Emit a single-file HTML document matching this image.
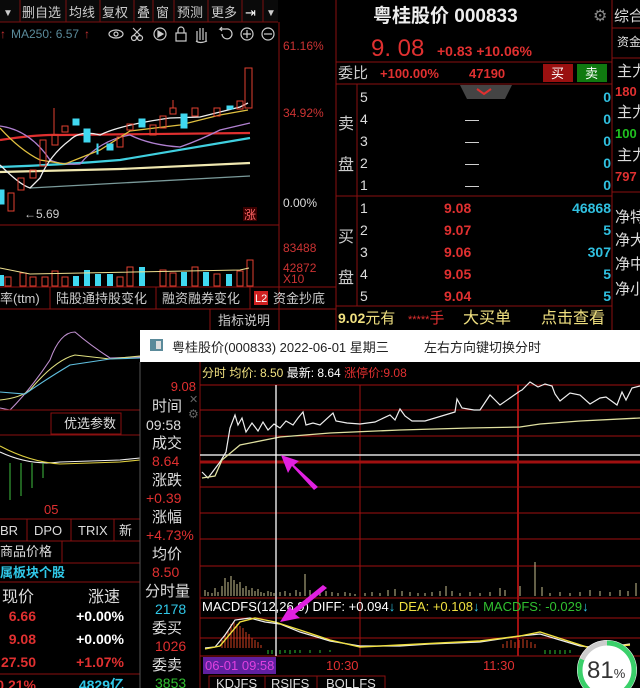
<!DOCTYPE html>
<html><head><meta charset="utf-8"><style>
html,body{margin:0;padding:0;background:#000;width:640px;height:688px;overflow:hidden}
svg{display:block}
text{font-family:"Liberation Sans","Noto Sans CJK SC",sans-serif}
.cn{font-family:"Liberation Sans","Noto Sans CJK SC",sans-serif}
</style></head><body>
<svg width="640" height="688" viewBox="0 0 640 688" xmlns="http://www.w3.org/2000/svg">
<rect width="640" height="688" fill="#000"/>
<!-- ===== top-left chart panel ===== -->
<g font-size="13" fill="#ccc">
<rect x="0" y="0" width="278" height="22" fill="#0a0a0a"/>
<line x1="0" y1="22" x2="278" y2="22" stroke="#7a1010"/>
<text x="3" y="16" fill="#ccc" font-size="10">▼</text>
<text x="22" y="17">删自选</text><text x="69" y="17">均线</text><text x="102" y="17">复权</text>
<text x="137" y="17">叠</text><text x="156" y="17">窗</text><text x="177" y="17">预测</text><text x="211" y="17">更多</text>
<text x="245" y="17" fill="#fff">⇥</text><text x="266" y="16" font-size="10">▼</text>
<g stroke="#7a1010"><line x1="20" y1="0" x2="20" y2="22"/><line x1="66" y1="0" x2="66" y2="22"/><line x1="100" y1="0" x2="100" y2="22"/><line x1="134" y1="0" x2="134" y2="22"/><line x1="153" y1="0" x2="153" y2="22"/><line x1="174" y1="0" x2="174" y2="22"/><line x1="208" y1="0" x2="208" y2="22"/><line x1="242" y1="0" x2="242" y2="22"/><line x1="263" y1="0" x2="263" y2="22"/></g>
<text x="0" y="38" fill="#c33" font-size="12">↑</text>
<text x="11" y="38" fill="#5a8a9a" font-size="12">MA250: 6.57</text><text x="84" y="38" fill="#c33" font-size="12">↑</text>
<g fill="none" stroke="#ccc" stroke-width="1.2">
<ellipse cx="116" cy="34" rx="7" ry="4"/><circle cx="116" cy="34" r="2"/>
<circle cx="134" cy="38" r="2.5"/><circle cx="140" cy="38" r="2.5"/><path d="M133 28 L141 36 M141 28 L133 36"/>
<circle cx="160" cy="34" r="6"/><path d="M158 31 L163 34 L158 37Z" fill="#ccc"/>
<rect x="176" y="33" width="10" height="8"/><path d="M178 33 v-3 a3 3 0 0 1 6 0 v3"/>
<path d="M197 41 v-10 M200 40 v-12 M203 40 v-12 M206 41 v-9 M196 41 q4 3 11 0"/>
<path d="M222 34 a5 5 0 1 0 4 -5 h-6 l2 -2 M220 29 l2 2"/>
<circle cx="247" cy="34" r="6"/><path d="M243 34 h8 M247 30 v8"/>
<circle cx="268" cy="34" r="6"/><path d="M264 34 h8"/>
</g>
<line x1="279" y1="22" x2="279" y2="330" stroke="#8a1010"/>
<line x1="0" y1="225" x2="279" y2="225" stroke="#8a1010"/>
<line x1="0" y1="287" x2="336" y2="287" stroke="#8a1010"/>
<line x1="0" y1="309" x2="336" y2="309" stroke="#8a1010"/>
<text x="283" y="50" fill="#c33" font-size="12">61.16%</text>
<text x="283" y="117" fill="#c33" font-size="12">34.92%</text>
<text x="283" y="207" fill="#ddd" font-size="12">0.00%</text>
<text x="283" y="252" fill="#c33" font-size="12">83488</text>
<text x="283" y="272" fill="#c33" font-size="12">42872</text>
<text x="283" y="283" fill="#c33" font-size="12">X10</text>
<!-- MAs -->
<g fill="none" stroke-width="1.3">
<path d="M0 140 Q40 134 60 135 L250 133" stroke="#e03030" stroke-width="2.2"/>
<path d="M0 167 Q60 165 120 160 L250 138" stroke="#40d0e0" stroke-width="2.2"/>
<path d="M0 172 L120 169 L250 163" stroke="#f0e8b0" stroke-width="2.2"/>
<path d="M30 188 L250 176" stroke="#7a9a9a"/>
<path d="M0 126 Q30 130 50 160 Q60 165 80 164 Q100 140 130 135 Q150 145 180 147 Q200 140 220 130 L250 123" stroke="#b080d0"/>
<path d="M0 128 Q20 150 40 160 L65 164 L100 150 L130 131 L180 125 L220 115 L248 110" stroke="#e0c040"/>
<path d="M0 165 Q20 185 30 188 L40 178 Q50 155 70 140 Q80 130 100 135 Q120 125 170 118 L200 117 L240 107 L248 103" stroke="#eee"/>
</g>
<!-- candles -->
<g stroke-width="1">
<g fill="none" stroke="#e04030">
<rect x="8" y="193" width="6" height="18"/><rect x="18" y="178" width="6" height="12"/><rect x="30" y="170" width="6" height="8"/>
<rect x="40" y="140" width="6" height="26"/><rect x="52" y="135" width="6" height="10"/><rect x="62" y="126" width="6" height="6"/>
<rect x="117" y="137" width="6" height="10"/><rect x="127" y="124" width="6" height="6"/><rect x="150" y="125" width="6" height="10"/>
<rect x="160" y="116" width="6" height="12"/><rect x="170" y="108" width="6" height="6"/><rect x="192" y="108" width="6" height="8"/>
<rect x="214" y="108" width="6" height="8"/><rect x="237" y="101" width="6" height="8"/><rect x="245" y="68" width="7" height="40"/>
<line x1="54" y1="108" x2="54" y2="135"/><line x1="173" y1="100" x2="173" y2="108"/>
</g>
<g fill="#40d8f0" stroke="#40d8f0">
<rect x="73" y="119" width="6" height="6"/><rect x="84" y="129" width="6" height="13"/><rect x="97" y="144" width="1" height="10"/>
<rect x="107" y="144" width="6" height="6"/><rect x="139" y="119" width="6" height="8"/><rect x="181" y="114" width="6" height="14"/>
<rect x="227" y="106" width="6" height="3"/><rect x="0" y="190" width="4" height="14"/>
</g>
</g>
<text x="24" y="218" fill="#ccc" font-size="12">←5.69</text>
<rect x="243" y="207" width="14" height="14" fill="#3a0000"/><text x="244" y="219" fill="#f66" font-size="12">涨</text>
<!-- volume -->
<g fill="none" stroke="#e04030">
<rect x="5" y="277" width="6" height="9"/><rect x="20" y="273" width="6" height="13"/><rect x="30" y="277" width="6" height="9"/><rect x="42" y="277" width="6" height="9"/><rect x="52" y="271" width="6" height="15"/><rect x="62" y="277" width="6" height="9"/><rect x="117" y="277" width="6" height="9"/><rect x="127" y="267" width="6" height="19"/><rect x="160" y="270" width="6" height="16"/><rect x="170" y="273" width="6" height="13"/><rect x="192" y="267" width="6" height="19"/><rect x="214" y="274" width="6" height="12"/><rect x="237" y="271" width="6" height="15"/><rect x="247" y="260" width="6" height="26"/>
</g>
<g fill="#40d8f0"><rect x="0" y="275" width="4" height="11"/><rect x="73" y="276" width="6" height="10"/><rect x="84" y="270" width="6" height="16"/><rect x="95" y="274" width="6" height="12"/><rect x="107" y="274" width="6" height="12"/><rect x="139" y="267" width="6" height="19"/><rect x="181" y="272" width="6" height="14"/><rect x="203" y="272" width="6" height="14"/><rect x="226" y="274" width="6" height="12"/></g>
<path d="M0 268 L30 274 L240 270 L249 268" stroke="#f0e090" fill="none"/>
<text x="0" y="303">率(ttm)</text><text x="56" y="303">陆股通持股变化</text><text x="162" y="303">融资融券变化</text>
<rect x="254" y="291" width="14" height="14" fill="#d02020"/><text x="255" y="302" fill="#fff" font-size="11">L2</text>
<text x="273" y="303">资金抄底</text>
<g stroke="#8a1010"><line x1="50" y1="287" x2="50" y2="309"/><line x1="156" y1="287" x2="156" y2="309"/><line x1="250" y1="287" x2="250" y2="309"/></g>
<line x1="210" y1="309" x2="210" y2="330" stroke="#8a1010"/>
<text x="218" y="325">指标说明</text>
</g>
<!-- ===== quote panel ===== -->
<g font-size="13">
<line x1="336" y1="0" x2="336" y2="330" stroke="#8a1010"/>
<line x1="612" y1="0" x2="612" y2="330" stroke="#8a1010"/>
<text x="373" y="22" fill="#eee" font-size="19" font-weight="bold">粤桂股价 000833</text>
<text x="371" y="56" fill="#e03030" font-size="24">9. 08</text>
<text x="437" y="56" fill="#e03030" font-size="14" font-weight="bold">+0.83  +10.06%</text>
<line x1="336" y1="62" x2="612" y2="62" stroke="#8a1010"/>
<text x="338" y="78" fill="#ccc" font-size="15">委比</text>
<text x="380" y="78" fill="#e03030" font-weight="bold">+100.00%</text><text x="469" y="78" fill="#e03030" font-weight="bold">47190</text>
<rect x="543" y="64" width="30" height="18" fill="#9a1010"/><text x="551" y="78" fill="#fff">买</text>
<rect x="577" y="64" width="30" height="18" fill="#107a10"/><text x="585" y="78" fill="#fff">卖</text>
<line x1="336" y1="84" x2="612" y2="84" stroke="#8a1010"/>
<path d="M460 85 L512 85 L505 99 L467 99Z" fill="#444"/><path d="M477 89 L484 94 L491 89" stroke="#e03030" stroke-width="2" fill="none"/>
<line x1="357" y1="84" x2="357" y2="306" stroke="#8a1010"/>
<text x="338" y="129" fill="#ccc" font-size="16">卖</text><text x="338" y="170" fill="#ccc" font-size="16">盘</text>
<text x="338" y="242" fill="#ccc" font-size="16">买</text><text x="338" y="283" fill="#ccc" font-size="16">盘</text>
<g fill="#ddd" font-size="14">
<text x="360" y="102">5</text><text x="360" y="124">4</text><text x="360" y="146">3</text><text x="360" y="168">2</text><text x="360" y="190">1</text>
<text x="360" y="213">1</text><text x="360" y="235">2</text><text x="360" y="257">3</text><text x="360" y="279">4</text><text x="360" y="301">5</text>
<text x="465" y="124">—</text><text x="465" y="146">—</text><text x="465" y="168">—</text><text x="465" y="190">—</text>
</g>
<g fill="#30c0e0" font-size="14" font-weight="bold" text-anchor="end">
<text x="611" y="102">0</text><text x="611" y="124">0</text><text x="611" y="146">0</text><text x="611" y="168">0</text><text x="611" y="190">0</text>
<text x="611" y="213">46868</text><text x="611" y="235">5</text><text x="611" y="257">307</text><text x="611" y="279">5</text><text x="611" y="301">5</text>
</g>
<g fill="#e03030" font-size="14" font-weight="bold">
<text x="444" y="213">9.08</text><text x="444" y="235">9.07</text><text x="444" y="257">9.06</text><text x="444" y="279">9.05</text><text x="444" y="301">9.04</text>
</g>
<line x1="336" y1="196" x2="612" y2="196" stroke="#8a1010"/>
<line x1="336" y1="306" x2="612" y2="306" stroke="#8a1010"/>
<text x="338" y="323" fill="#f0e080" font-size="15"><tspan font-weight="bold" font-size="14">9.02</tspan>元有</text>
<text x="408" y="323" fill="#e03030" font-size="15"><tspan font-size="11">*****</tspan>手</text>
<text x="463" y="323" fill="#f0e080" font-size="16">大买单</text>
<text x="541" y="323" fill="#f0e080" font-size="16">点击查看</text>
<!-- far right -->
<text x="593" y="21" fill="#888" font-size="16">⚙</text>
<text x="614" y="21" fill="#ddd" font-size="15">综合</text>
<line x1="612" y1="28" x2="640" y2="28" stroke="#8a1010"/>
<text x="617" y="46" fill="#ddd" font-size="12">资金</text>
<line x1="612" y1="58" x2="640" y2="58" stroke="#8a1010"/>
<text x="617" y="76" fill="#ddd" font-size="15">主力</text><text x="615" y="96" fill="#e03030" font-weight="bold">180</text>
<text x="617" y="117" fill="#ddd" font-size="15">主力</text><text x="615" y="138" fill="#20c020" font-weight="bold">100</text>
<text x="617" y="160" fill="#ddd" font-size="15">主力</text><text x="615" y="181" fill="#e03030" font-weight="bold">797</text>
<line x1="612" y1="192" x2="640" y2="192" stroke="#8a1010"/>
<text x="615" y="222" fill="#ddd" font-size="15">净特</text><text x="615" y="245" fill="#ddd" font-size="15">净大</text>
<text x="615" y="269" fill="#ddd" font-size="15">净中</text><text x="615" y="294" fill="#ddd" font-size="15">净小</text>
</g>
<!-- ===== left lower panel ===== -->
<g font-size="13" fill="#ddd">
<g fill="none" stroke-width="1.1">
<path d="M0 408 L10 410 Q30 390 50 360 Q60 332 75 332 Q90 345 110 358 L140 357" stroke="#c090d0"/>
<path d="M0 400 Q20 398 30 390 Q55 360 75 355 L110 359 L140 356" stroke="#e0e080"/>
<path d="M0 392 L25 394 Q45 380 70 365 L110 359 L140 358" stroke="#60c0e0"/>
<path d="M0 452 Q30 466 60 462 L120 460 L140 458" stroke="#eee"/>
<path d="M0 446 Q30 462 60 464 L120 462 L140 460" stroke="#e0d040"/>
</g>
<g stroke="#40c040"><line x1="10" y1="463" x2="10" y2="500"/><line x1="21" y1="463" x2="21" y2="496"/><line x1="32" y1="463" x2="32" y2="488"/><line x1="43" y1="463" x2="43" y2="478"/></g>
<line x1="0" y1="410" x2="140" y2="410" stroke="#8a1010"/>
<rect x="51" y="413" width="70" height="21" fill="none" stroke="#8a1010"/>
<text x="64" y="428">优选参数</text>
<line x1="0" y1="435" x2="140" y2="435" stroke="#8a1010"/>
<text x="44" y="514" fill="#e03030">05</text>
<line x1="0" y1="519" x2="140" y2="519" stroke="#8a1010"/><line x1="0" y1="541" x2="140" y2="541" stroke="#8a1010"/>
<text x="0" y="535">BR</text><text x="34" y="535">DPO</text><text x="78" y="535">TRIX</text><text x="119" y="535">新</text>
<g stroke="#8a1010"><line x1="27" y1="519" x2="27" y2="541"/><line x1="71" y1="519" x2="71" y2="541"/><line x1="114" y1="519" x2="114" y2="541"/></g>
<text x="0" y="556">商品价格</text><line x1="62" y1="541" x2="62" y2="563" stroke="#8a1010"/>
<line x1="0" y1="563" x2="140" y2="563" stroke="#8a1010"/>
<text x="0" y="577" fill="#30c8e8" font-weight="bold">属板块个股</text>
<line x1="0" y1="582" x2="140" y2="582" stroke="#8a1010"/>
<text x="2" y="602" font-size="16">现价</text><text x="88" y="602" font-size="16">涨速</text>
<g font-weight="bold" font-size="14">
<text x="36" y="621" fill="#e03030" text-anchor="end">6.66</text><text x="124" y="621" text-anchor="end" fill="#fff">+0.00%</text>
<text x="36" y="644" fill="#e03030" text-anchor="end">9.08</text><text x="124" y="644" text-anchor="end" fill="#fff">+0.00%</text>
<text x="36" y="667" fill="#e03030" text-anchor="end">27.50</text><text x="124" y="667" text-anchor="end" fill="#e03030">+1.07%</text>
<text x="36" y="690" fill="#e03030" text-anchor="end">0.21%</text><text x="124" y="690" text-anchor="end" fill="#30c8e8">4829亿</text>
</g>
<line x1="0" y1="674" x2="140" y2="674" stroke="#8a1010"/>
</g>
<!-- ===== popup ===== -->
<rect x="140" y="330" width="500" height="32" fill="#fff"/>
<rect x="150" y="339" width="13" height="12" fill="#5a8a9a"/><rect x="156" y="341" width="5" height="8" fill="#ddd"/>
<text x="172" y="352" fill="#222" font-size="13">粤桂股价(000833) 2022-06-01 星期三</text>
<text x="424" y="352" fill="#222" font-size="13">左右方向键切换分时</text>
<rect x="140" y="362" width="500" height="326" fill="#000"/>
<line x1="140" y1="362" x2="140" y2="688" stroke="#555"/>
<g font-size="15" fill="#ddd">
<text x="196" y="391" fill="#e03030" font-size="13" text-anchor="end">9.08</text>
<text x="152" y="411">时间</text><text x="146" y="430" font-size="14">09:58</text>
<text x="152" y="448">成交</text><text x="152" y="466" fill="#e03030" font-size="14">8.64</text>
<text x="152" y="485">涨跌</text><text x="146" y="503" fill="#e03030" font-size="14">+0.39</text>
<text x="152" y="522">涨幅</text><text x="146" y="540" fill="#e03030" font-size="14">+4.73%</text>
<text x="152" y="559">均价</text><text x="152" y="577" fill="#e03030" font-size="14">8.50</text>
<text x="145" y="596">分时量</text><text x="155" y="614" fill="#30c8e8" font-size="14">2178</text>
<text x="152" y="633">委买</text><text x="155" y="651" fill="#e03030" font-size="14">1026</text>
<text x="152" y="670">委卖</text><text x="155" y="688" fill="#30c030" font-size="14">3853</text>
</g>
<text x="189" y="403" fill="#666" font-size="11">✕</text><text x="188" y="418" fill="#666" font-size="12">⚙</text>
<line x1="200" y1="362" x2="200" y2="688" stroke="#8a1010"/>
<text x="202" y="377" font-size="12" fill="#f0e080">分时 均价: 8.50 <tspan fill="#fff">最新: 8.64</tspan> <tspan fill="#e03030">涨停价:9.08</tspan></text>
<g stroke="#a01010">
<line x1="200" y1="385" x2="640" y2="385"/><line x1="200" y1="410" x2="640" y2="410"/><line x1="200" y1="436" x2="640" y2="436"/>
<line x1="200" y1="462" x2="640" y2="462" stroke-width="3"/><line x1="200" y1="487" x2="640" y2="487"/><line x1="200" y1="513" x2="640" y2="513"/>
<line x1="200" y1="539" x2="640" y2="539"/><line x1="200" y1="566" x2="640" y2="566"/><line x1="200" y1="598" x2="640" y2="598"/>
<line x1="200" y1="618" x2="640" y2="618"/><line x1="200" y1="638" x2="640" y2="638"/><line x1="200" y1="656" x2="640" y2="656"/>
<line x1="360" y1="385" x2="360" y2="656"/><line x1="518" y1="385" x2="518" y2="656" stroke-width="2"/>
</g>
<line x1="200" y1="455" x2="640" y2="455" stroke="#ddd" stroke-width="1.5"/>
<!-- price line -->
<path d="M202 472 L208 478 L214 470 L220 462 L226 452 L230 428 L235 415 L238 425 L242 418 L246 432 L252 423 L258 431 L263 422 L268 430 L274 424 L280 428 L286 421 L293 425 L298 418 L303 412 L306 425 L313 423 L320 425 L333 413 L336 421 L347 423 L360 424 L375 422 L390 415 L395 420 L400 409 L405 416 L412 421 L425 421 L455 412 L457 399 L462 408 L474 410 L480 410 L490 395 L500 405 L520 391 L522 390 L530 382 L538 387 L545 384 L552 386 L555 394 L560 401 L570 393 L580 395 L590 404 L600 398 L606 397 L617 405 L622 392 L626 400 L632 388 L640 386" fill="none" stroke="#eee" stroke-width="1.2"/>
<path d="M202 478 L215 476 L222 460 L240 445 L280 437 L330 433 L400 430 L470 428 L520 427 L540 424 L580 421 L640 418" fill="none" stroke="#e0e0a0" stroke-width="1.3"/>
<!-- vol bars -->
<g stroke="#c8c090" stroke-width="1">
<path d="M205 596v-6M208 596v-4M212 596v-3M215 596v-8M218 596v-4M222 596v-10M225 596v-18M228 596v-14M231 596v-20M234 596v-16M237 596v-12M240 596v-14M243 596v-8M246 596v-10M249 596v-6M252 596v-8M255 596v-5M258 596v-7M261 596v-4M264 596v-3M268 596v-5M271 596v-4M274 596v-3M280 596v-4M285 596v-5M290 596v-3M296 596v-6M300 596v-4M305 596v-22M310 596v-6M315 596v-4M320 596v-3M326 596v-5M332 596v-4M338 596v-3M345 596v-4M350 596v-3M355 596v-2M365 596v-3M372 596v-4M380 596v-3M388 596v-6M395 596v-7M402 596v-5M410 596v-4M418 596v-3M425 596v-3M432 596v-4M440 596v-5M446 596v-10M452 596v-5M460 596v-3M470 596v-4M480 596v-3M490 596v-4M500 596v-8M505 596v-6M520 596v-10M535 596v-34M542 596v-9M550 596v-3M560 596v-4M570 596v-3M580 596v-4M590 596v-6M600 596v-5M610 596v-4M620 596v-6M628 596v-5M636 596v-13"/>
</g>
<text x="202" y="611" font-size="13" fill="#fff">MACDFS(12,26,9) DIFF: +0.094<tspan fill="#30c8e8">↓</tspan> <tspan fill="#f0e040">DEA: +0.108</tspan><tspan fill="#30c8e8">↓</tspan> <tspan fill="#30c030">MACDFS: -0.029</tspan><tspan fill="#30c8e8">↓</tspan></text>
<g stroke="#d04020"><path d="M222 648v-8M225 648v-14M228 648v-18M231 648v-24M234 648v-26M237 648v-24M240 648v-22M243 648v-20M246 648v-16M249 648v-14M252 648v-10M255 648v-8M258 648v-6M261 648v-3M503 648v-4M507 648v-7M511 648v-8M515 648v-6M519 648v-8M523 648v-9M527 648v-8M531 648v-6M535 648v-4"/></g>
<g stroke="#30c030"><path d="M268 650v4M272 650v4M276 650v4M280 650v4M285 650v3M290 650v4M295 650v3M300 650v3M310 650v3M320 650v3M330 650v2M545 650v4M550 650v4M555 650v4M560 650v4M565 650v4M570 650v3"/></g>
<path d="M205 648 L215 647 L225 635 L235 620 L250 618 L265 622 L280 624 L300 632 L330 641 L360 646 L400 646 L430 644 L480 642 L520 636 L540 634 L560 640 L580 646 L600 648 L630 644" fill="none" stroke="#eee" stroke-width="1.2"/>
<path d="M205 649 L220 646 L240 622 L255 618 L275 622 L300 630 L330 640 L360 647 L400 645 L440 643 L480 641 L520 636 L540 632 L565 640 L590 648 L630 645" fill="none" stroke="#f0e040" stroke-width="1.4"/>
<line x1="276" y1="385" x2="276" y2="656" stroke="#fff" stroke-width="1.3"/>
<!-- magenta arrows -->
<path d="M314 490 L292 466 L288 473 L281 455 L299 461 L294 465 L318 487Z" fill="#e020e0"/>
<path d="M327 588 L295 614 L300 618 L280 622 L290 606 L292 610 L323 585Z" fill="#e020e0"/>
<rect x="203" y="657" width="73" height="17" fill="#6020a0"/>
<text x="205" y="670" fill="#e040e0" font-size="13">06-01 09:58</text>
<text x="326" y="670" fill="#e03030" font-size="13">10:30</text>
<text x="483" y="670" fill="#e03030" font-size="13">11:30</text>
<g stroke="#8a1010" fill="none"><rect x="209" y="676" width="56" height="14"/><rect x="265" y="676" width="52" height="14"/><rect x="317" y="676" width="68" height="14"/></g>
<text x="216" y="688" fill="#ddd" font-size="13">KDJFS</text><text x="271" y="688" fill="#ddd" font-size="13">RSIFS</text><text x="326" y="688" fill="#ddd" font-size="13">BOLLFS</text>
<!-- badge -->
<circle cx="607" cy="670" r="30" fill="#fff"/>
<circle cx="607" cy="670" r="27" fill="none" stroke="#3ad06a" stroke-width="5" stroke-dasharray="138 200" transform="rotate(-90 607 670)"/>
<circle cx="607" cy="670" r="27" fill="none" stroke="#ccc" stroke-width="5" stroke-dasharray="0 138 32 200" transform="rotate(-90 607 670)"/>
<text x="587" y="678" fill="#333" font-size="24">81<tspan font-size="13">%</tspan></text>
</svg>
</body></html>
